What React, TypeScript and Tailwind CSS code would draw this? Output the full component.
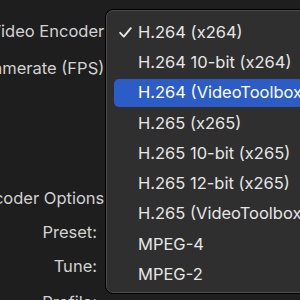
const items = [
  'H.264 (x264)',
  'H.264 10-bit (x264)',
  'H.264 (VideoToolbox)',
  'H.265 (x265)',
  'H.265 10-bit (x265)',
  'H.265 12-bit (x265)',
  'H.265 (VideoToolbox)',
  'MPEG-4',
  'MPEG-2',
];

const checked = 0;
const selected = 2;

export default function App() {
  return (
    <div
      className="relative w-[300px] h-[300px] overflow-hidden bg-[#1e1e1e] text-[16.5px] text-[#d2d2d2]"
      style={{ fontFamily: 'Inter, "Noto Sans", sans-serif' }}
    >
      {/* Labels column */}
      <div className="flex flex-col items-end w-[109px]">
        <div className="h-[20px] mt-[21px] leading-[20px] whitespace-nowrap">Video Encoder:</div>
        <div className="h-[20px] mt-[17px] leading-[20px] whitespace-nowrap">Framerate (FPS):</div>
        <div className="h-[20px] mt-[110px] leading-[20px] whitespace-nowrap">Encoder Options:</div>
        <div className="h-[20px] mt-[14px] mr-[12px] leading-[20px]">Preset:</div>
        <div className="h-[20px] mt-[14px] mr-[12px] leading-[20px]">Tune:</div>
        <div className="h-[20px] mt-[16px] mr-[12px] leading-[20px]">Profile:</div>
      </div>

      {/* Popup menu */}
      <div className="absolute left-[105px] top-[9px] w-[240px] h-[285px] rounded-[8px] border border-black bg-black">
        <div className="h-full w-full rounded-[7px] border border-[#4b4b4b] bg-[#2f2f2f] py-[6px] pl-[7px] text-[#e6e6e6]">
          {items.map((label, i) => (
            <div key={label} className="h-[30.25px] py-px">
              <div
                className={`flex h-full items-center rounded-[5px] whitespace-nowrap ${
                  i === selected ? 'bg-[#2c5cc5] text-white' : ''
                }`}
              >
                <span className="w-[24px] pl-[5px] flex items-center">
                  {i === checked && (
                    <svg width="13" height="11" viewBox="0 0 13 11" fill="none">
                      <path d="M1.2 5.8 L4.8 9.6 L11.8 1.2" stroke="#e6e6e6" strokeWidth="1.9" strokeLinecap="round" strokeLinejoin="round" />
                    </svg>
                  )}
                </span>
                <span>{label}</span>
              </div>
            </div>
          ))}
        </div>
      </div>
    </div>
  );
}
